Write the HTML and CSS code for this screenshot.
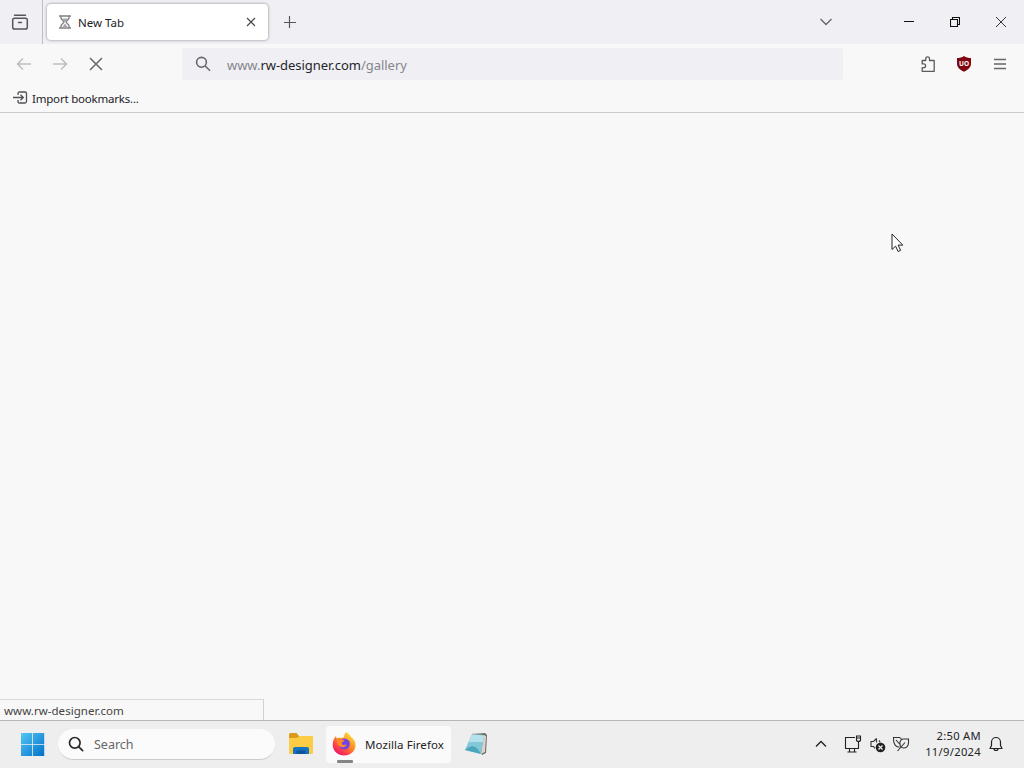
FILE: index.html
```html
<!DOCTYPE html>
<html lang="en">
<head>
    <meta charset="UTF-8">
    <meta name="viewport" content="width=device-width, initial-scale=1.0">
    <title>New Tab</title>
    <link rel="stylesheet" href="styles.css">
</head>
<body>
    <div class="desktop">
        <!-- Tabs -->
        <div class="tab-bar">
            <div class="firefox-view">
                <svg width="18" height="18" viewBox="0 0 18 18" fill="none" stroke="#55555e" stroke-width="1.5" stroke-linecap="round"><path d="M3.500 2.300h11"/><rect x="1.700" y="5.300" width="14.600" height="10.700" rx="1.800"/><path d="M7.500 9.500h3"/></svg>
            </div>
            <div class="tab">
                <svg width="14" height="14" viewBox="0 0 14 14" fill="none" stroke="#808085" stroke-width="1.3"><path d="M1 1h12M1 13h12M3 1v2.5L6 7l-3 3.500V13M11 1v2.500L8 7l3 3.500V13"/><path d="M4 3.500h6L7 7zM4 12.500L7 8.500l3 4z" fill="#a5a5aa" stroke="none"/></svg>
                <span class="tab-title">New Tab</span>
                <svg width="10" height="10" viewBox="0 0 10 10" stroke="#45454c" stroke-width="1.1"><path d="M1 1l8 8M9 1L1 9"/></svg>
            </div>
            <div class="new-tab">
                <svg width="12" height="12" viewBox="0 0 12 12" stroke="#55555c" stroke-width="1.2"><path d="M5.500 0v12M0 6.500h12"/></svg>
            </div>
            <div class="window-controls">
                <svg class="list-tabs" width="14" height="14" viewBox="0 0 14 14" fill="none" stroke="#66666c" stroke-width="1.4"><path d="M1.500 4L7 9.500 12.500 4"/></svg>
                <div class="control"><svg width="10" height="10" viewBox="0 0 10 10" stroke="#111"><path d="M0 4.500h10"/></svg></div>
                <div class="control"><svg width="10" height="10" viewBox="0 0 10 10" fill="none" stroke="#111" stroke-width="1.1"><path d="M.5 2.500h7v7h-7zM2.500 2.500v-2h7v7h-2"/></svg></div>
                <div class="control"><svg width="12" height="12" viewBox="0 0 12 12" stroke="#333"><path d="M1 1l10 10M11 1L1 11"/></svg></div>
            </div>
        </div>

        <!-- Navigation -->
        <div class="nav-bar">
            <div class="nav-buttons">
                <svg width="16" height="16" viewBox="0 0 16 16" fill="none" stroke="#bdbdc0" stroke-width="1.5"><path d="M15 8H1.500M7 2.500L1.500 8 7 13.500"/></svg>
                <svg width="16" height="16" viewBox="0 0 16 16" fill="none" stroke="#bdbdc0" stroke-width="1.5"><path d="M1 8h13.500M9 2.500L14.500 8 9 13.500"/></svg>
                <svg width="16" height="16" viewBox="0 0 16 16" stroke="#66666a" stroke-width="1.500"><path d="M2 2l12 12M14 2L2 14"/></svg>
            </div>
            <div class="url-bar">
                <svg width="16" height="16" viewBox="0 0 16 16" fill="none" stroke="#66666c" stroke-width="1.6"><circle cx="6.500" cy="6.300" r="4.900"/><path d="M10 9.800l5 5"/></svg>
                <span class="url">www.<span class="domain">rw-designer.com</span>/gallery</span>
            </div>
            <div class="nav-tools">
                <svg width="16" height="18" viewBox="0 0 16 18" fill="none" stroke="#5b5b60" stroke-width="1.3" stroke-linejoin="round"><path d="M2.200 5.500h3.500V3.700a1.900 1.900 0 0 1 3.800 0v1.800h4.700v10.800h-12v-3.600h1.500a1.900 1.900 0 0 0 0-3.800H2.200z"/></svg>
                <svg width="16" height="18" viewBox="0 0 16 18"><path d="M8 1c2 1.400 4.300 2 7 2.100v5.400c0 4-3 6.300-7 8.200-4-1.900-7-4.200-7-8.200V3.100C3.700 3 6 2.400 8 1z" fill="#800510"/><text x="8" y="10.800" class="shield-text">UO</text></svg>
                <svg width="16" height="18" viewBox="0 0 16 18" stroke="#66666a" stroke-width="1.3"><path d="M2 4.500h12M2 9h12M2 13.500h12"/></svg>
            </div>
        </div>

        <!-- Bookmarks -->
        <div class="bookmarks-bar">
            <svg width="15" height="14" viewBox="0 0 15 14" fill="none" stroke="#505056" stroke-width="1.300"><path d="M5 4V2.500Q5 1 6.500 1h5.500Q13.500 1 13.500 2.500v8q0 1.500-1.500 1.500h-5.500Q5 12 5 10.500V9M0 6.500h10M7.500 3.800l2.800 2.700-2.800 2.700"/></svg>
            <span>Import bookmarks...</span>
        </div>

        <div class="page">
            <div class="status">www.rw-designer.com</div>
            <svg class="cursor" width="13" height="20" viewBox="0 0 13 20"><path d="M1 1v15.500l3.600-3.400 2.500 5.400 2.500-1.200-2.500-5.200h4.700z" fill="#fff" stroke="#222" stroke-width="1"/></svg>
        </div>

        <!-- Taskbar -->
        <div class="taskbar">
            <svg width="24" height="24" viewBox="0 0 24 24">
                <defs><linearGradient id="win" x1="0" y1="0" x2="24" y2="24" gradientUnits="userSpaceOnUse"><stop offset="0" stop-color="#55c9f5"/><stop offset="1" stop-color="#006fc9"/></linearGradient></defs>
                <path d="M0 1h11.200v11.200H0zM12 1h11.200v11.200H12zM0 13h11.200v11H0zM12 13h11.200v11H12z" fill="url(#win)"/>
            </svg>
            <div class="search">
                <svg width="16" height="16" viewBox="0 0 16 16" fill="none" stroke="#292929" stroke-width="1.700"><circle cx="6.800" cy="6.800" r="5.300"/><path d="M10.600 10.600l4 4" stroke-linecap="round"/></svg>
                <span>Search</span>
            </div>
            <svg class="explorer" width="26" height="24" viewBox="0 0 26 24">
                <path d="M1 2.500Q1 1 2.500 1h6L11 4h12.500Q25 4 25 5.500V20H1z" fill="#d99b18"/>
                <path d="M1 6h8l2.500-2H25v16.500q0 1.500-1.500 1.500h-21Q1 22 1 20.500z" fill="#fdcc45"/>
                <path d="M5 22v-5q0-2 2-2h12q2 0 2 2v5z" fill="#1673bf"/><path d="M8.500 18.500h9V22h-9z" fill="#0c559c"/>
            </svg>
            <div class="task">
                <svg width="24" height="24" viewBox="0 0 24 24">
                    <defs><linearGradient id="fire" x1="20" y1="2" x2="5" y2="22" gradientUnits="userSpaceOnUse"><stop offset="0" stop-color="#ffe13a"/><stop offset=".45" stop-color="#ff8a22"/><stop offset=".8" stop-color="#ff3550"/><stop offset="1" stop-color="#e5196f"/></linearGradient></defs>
                    <path d="M14 0c3 1.500 4 3.500 5 5 1 .5 2 1.500 2.500 2.500C23 9 23.500 11 23.500 13 23.500 19 18.500 23.500 12.200 23.500S.7 19 .7 12.700C.7 9.500 1.800 6.500 4 4l.5 2.500C6 5.600 7.500 5.500 9 6c1-.5 2.200-.5 3-.5 0-2 .7-4 2-5.500z" fill="url(#fire)"/>
                    <circle cx="12.300" cy="12" r="5.600" fill="#7542e5"/>
                    <path d="M4.500 7.500c2-1.300 4-1 5.300 0l2.700.7c-.3 1.300-1.500 1.600-2.500 2-.7 2 .5 3 2 2.700 1-.2 2-.7 2.500 0-1 2-3.500 3-5.500 2C6.500 14 5 12 4.500 7.500z" fill="#ff8a2c"/>
                </svg>
                <span>Mozilla Firefox</span>
            </div>
            <svg class="notepad" width="24" height="24" viewBox="0 0 24 24">
                <path d="M9 2l12-1 2 2-1 18-4 2z" fill="#6c6964"/>
                <path d="M8 2l12 1-3 19L1 18z" fill="#83c8d9"/>
                <path d="M8 2l12 1-1 7L5 10z" fill="#b5e1ea"/><path d="M1 18q5-5 9-3.500T17 22z" fill="#4ba6bd"/>
                <path d="M20 3l2 1-1 16-4 2z" fill="#d8d5cf"/><path d="M8.500 2l12 1" stroke="#777" stroke-dasharray="1 1"/>
            </svg>
            <div class="tray">
                <svg width="12" height="12" viewBox="0 0 12 12" fill="none" stroke="#222" stroke-width="1.300"><path d="M1 8.500l5-5 5 5"/></svg>
                <svg class="network" width="18" height="18" viewBox="0 0 18 18" fill="none" stroke="#222" stroke-width="1.100"><path d="M11 2.500H1.500v11h13V8M5.500 13.500V17M10.500 13.500V17M3.500 17h9M12.500 1h4v4.500q-2 2-4 0zM14.500 6.500V9M12.500 3h4"/></svg>
                <svg class="volume" width="17" height="17" viewBox="0 0 17 17" fill="none" stroke="#333" stroke-width="1.100"><path d="M7.500 2.500L4.500 5.500H2v5h2.500L6 12.500M7.500 2.500v4M10 4.500q1 1 1 2"/><circle cx="11.500" cy="11.500" r="4.800" fill="#222" stroke="none"/><path d="M9.500 9.500l4 4M13.500 9.500l-4 4" stroke="#eee" stroke-width="1.200"/></svg>
                <svg class="leaf" width="18" height="16" viewBox="0 0 18 16" fill="none" stroke="#333" stroke-width="1.100"><path d="M7.500 11C4 11.500 1 8 1.500 1.500h6q1.500.5 2 2M4 4l4.500 5M8.500 10.500C7 7 8 3.500 11 3h5.500v4c0 3-2 5-5 5q-1.800-.2-3-1.500M5.500 15L13 6.500"/></svg>
                <div class="clock">
                    <div>2:50 AM</div>
                    <div>11/9/2024</div>
                </div>
                <svg class="bell" width="14" height="16" viewBox="0 0 14 16" fill="none" stroke="#222" stroke-width="1.200" stroke-linejoin="round"><path d="M2.500 6a4.500 4.500 0 0 1 9 0v3.500l1.500 3H1l1.500-3zM5 12.500q0 2 2 2t2-2"/></svg>
            </div>
        </div>
    </div>
</body>
</html>
```
FILE: styles.css
```css
body {
    font-family: "Noto Sans", "Open Sans", sans-serif;
    font-size: 12px;
    margin: 0;
    color: #222226;
    overflow: hidden;
}

svg {
    display: block;
    flex-shrink: 0;
}

span {
    white-space: nowrap;
}

.desktop {
    display: flex;
    flex-direction: column;
    width: 1024px;
    height: 768px;
    background-color: #f8f8f8;
}

.tab-bar {
    display: flex;
    align-items: center;
    height: 44px;
    background-color: #f0f0f4;
}

.firefox-view {
    box-sizing: border-box;
    width: 43px;
    height: 44px;
    padding: 13px 0 0 11px;
    border-right: 1px solid #bdbdc3;
}

.tab {
    display: flex;
    align-items: center;
    box-sizing: border-box;
    width: 221px;
    height: 36px;
    margin-left: 4px;
    padding: 0 12px 0 11px;
    background-color: #fff;
    border-radius: 4px;
    box-shadow: 0 0 3px rgba(0, 0, 0, 0.45);
}

.tab-title {
    flex: 1;
    margin-left: 6px;
    font-size: 11.5px;
}

.new-tab {
    margin-left: 16px;
}

.window-controls {
    display: flex;
    align-items: center;
    margin-left: auto;
}

.list-tabs {
    margin-right: 53px;
}

.control {
    display: flex;
    justify-content: center;
    width: 46px;
}

.nav-bar {
    display: flex;
    align-items: center;
    height: 40px;
}

.nav-buttons {
    display: flex;
    gap: 20px;
    width: 166px;
    padding-left: 16px;
}

.url-bar {
    display: flex;
    align-items: center;
    width: 648px;
    height: 32px;
    padding-left: 13px;
    background-color: #f0f0f4;
    border-radius: 2px;
}

.url {
    margin: 2px 0 0 16px;
    font-size: 13px;
    letter-spacing: -0.04px;
    color: #85858b;
}

.domain {
    color: #25252b;
}

.nav-tools {
    display: flex;
    align-items: center;
    gap: 20px;
    margin-left: 77px;
}

.shield-text {
    font-size: 6.5px;
    font-weight: bold;
    fill: #fff;
    text-anchor: middle;
}

.bookmarks-bar {
    display: flex;
    align-items: center;
    box-sizing: border-box;
    height: 29px;
    gap: 4px;
    padding: 0 0 0 13px;
    border-bottom: 1px solid #cbcbcc;
    font-size: 11.5px;
    letter-spacing: -0.2px;
}

.page {
    position: relative;
    flex: 1;
}

.status {
    position: absolute;
    left: 0;
    bottom: 0;
    box-sizing: border-box;
    width: 264px;
    height: 21px;
    padding-left: 4px;
    border-top: 1px solid #dadada;
    border-right: 1px solid #d0d0d0;
    font-size: 11.5px;
    line-height: 22px;
    letter-spacing: 0.04px;
    color: #444;
}

.cursor {
    position: absolute;
    left: 891px;
    top: 120px;
}

.taskbar {
    display: flex;
    align-items: center;
    box-sizing: border-box;
    height: 48px;
    padding: 0 0 1px 21px;
    background-color: #eee;
    border-top: 1px solid #b7b7b7;
}

.search {
    display: flex;
    align-items: center;
    box-sizing: border-box;
    width: 217px;
    height: 31px;
    margin-left: 13px;
    padding: 1px 0 0 10px;
    gap: 10px;
    background-color: #fbfbfb;
    border-bottom: 1px solid #ccc;
    border-radius: 16px;
    font-size: 12.5px;
    color: #666;
}

.explorer {
    margin-left: 13px;
}

.task {
    position: relative;
    display: flex;
    align-items: center;
    box-sizing: border-box;
    width: 125px;
    height: 37px;
    margin-left: 12px;
    padding-left: 6px;
    gap: 9px;
    background-color: #fafafa;
    border-radius: 4px;
    font-size: 11.5px;
    letter-spacing: 0.08px;
}

/* running app marker */
.task::after {
    content: "";
    position: absolute;
    left: 11px;
    bottom: 0;
    width: 16px;
    height: 3px;
    border-radius: 1px;
    background-color: #858585;
}

.notepad {
    margin-left: 13px;
}

.tray {
    display: flex;
    align-items: center;
    margin-left: auto;
    padding-right: 21px;
}

.network {
    margin-left: 17px;
}

.volume {
    margin-left: 7px;
}

.leaf {
    margin-left: 6px;
}

.clock {
    width: 71px;
    font-size: 11.2px;
    line-height: 16px;
    letter-spacing: 0.3px;
    text-align: right;
}

.bell {
    margin-left: 8px;
}
```
